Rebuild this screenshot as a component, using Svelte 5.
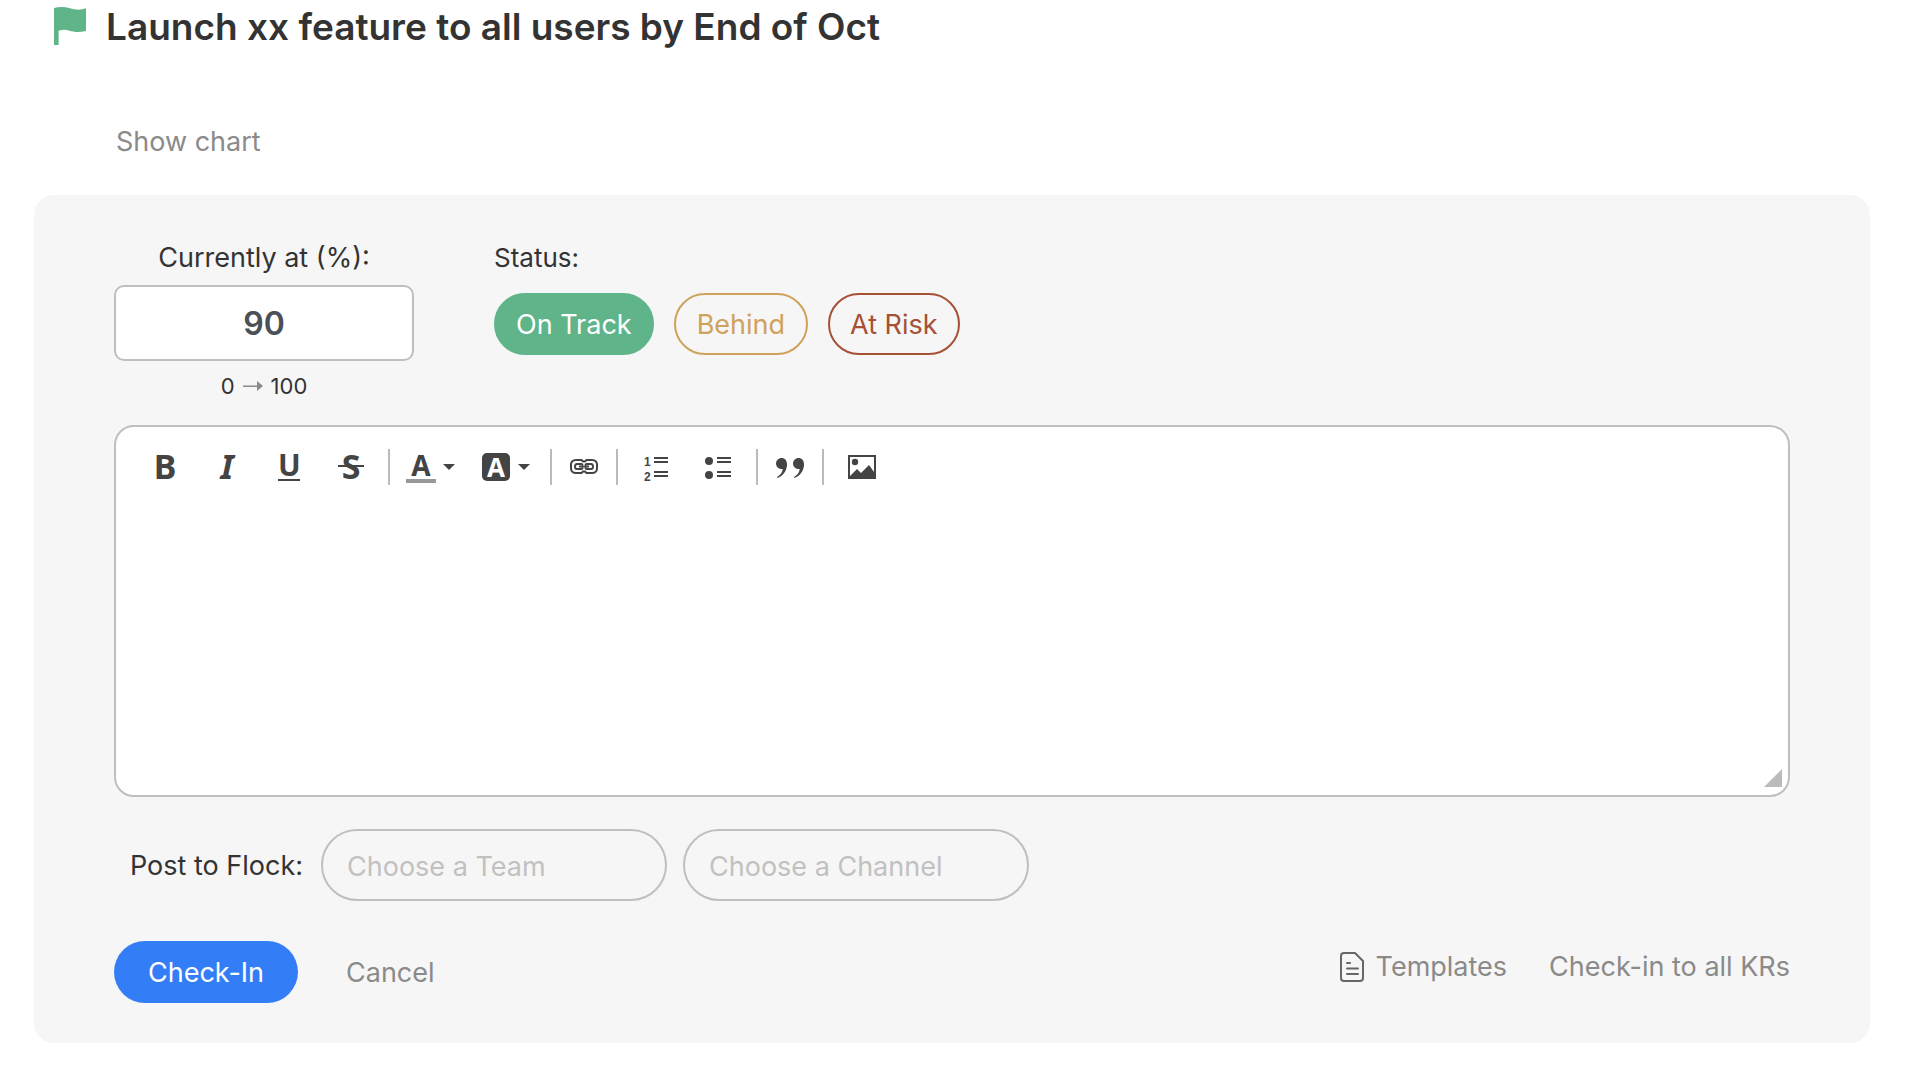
<script lang="ts">
  type Status = { id: string; label: string };

  const statuses: Status[] = [
    { id: "on-track", label: "On Track" },
    { id: "behind", label: "Behind" },
    { id: "at-risk", label: "At Risk" },
  ];

  let current = $state(90);
  let status = $state("on-track");
  let team = $state("");
  let channel = $state("");
</script>

<header>
  <svg class="flag" viewBox="0 0 32 38" aria-hidden="true">
    <path d="M0 1C5-.4 11-.2 16 1.300C21 3 27 3.200 32 1.300V24C26 25.600 20 25.400 15 23.600C11 22.400 8 22.700 4.600 23.800V38H0Z" />
  </svg>
  <h1>Launch xx feature to all users by End of Oct</h1>
</header>

<button class="plain show-chart">Show chart</button>

<main>
  <section class="progress">
    <div class="current">
      <label for="current-value">Currently at (%):</label>
      <input id="current-value" type="text" inputmode="numeric" bind:value={current} />
      <p class="range">
        <span>0</span>
        <svg viewBox="0 0 20 12" aria-hidden="true">
          <path d="M0 5.500H14V1L20 6L14 11V7H0Z" />
        </svg>
        <span>100</span>
      </p>
    </div>

    <div class="status" role="group" aria-labelledby="status-label">
      <span id="status-label">Status:</span>
      <div class="pills">
        {#each statuses as s}
          <button
            class="pill {s.id}"
            class:selected={status === s.id}
            aria-pressed={status === s.id}
            onclick={() => (status = s.id)}>{s.label}</button
          >
        {/each}
      </div>
    </div>
  </section>

  <section class="editor">
    <div class="toolbar" role="toolbar" aria-label="Formatting">
      <div class="tools first">
        <button class="letter" aria-label="Bold">B</button>
        <button class="letter italic" aria-label="Italic">I</button>
        <button class="letter underline" aria-label="Underline"><span>U</span></button>
        <button class="letter strike" aria-label="Strikethrough"><span>S</span></button>
      </div>
      <div class="tools colors">
        <button class="menu" aria-label="Text color">
          <span class="text-color">A</span>
          <svg class="caret" viewBox="0 0 12 6"><path d="M0 0H12L6 6Z" /></svg>
        </button>
        <button class="menu" aria-label="Background color">
          <span class="fill-color">A</span>
          <svg class="caret" viewBox="0 0 12 6"><path d="M0 0H12L6 6Z" /></svg>
        </button>
      </div>
      <div class="tools">
        <button aria-label="Insert link">
          <svg width="28" height="28" viewBox="0 0 28 28" fill="none" stroke="#444" stroke-width="2">
            <path d="M13 8.500L11.500 7H6C3 7 1 9 1 11.500V15.500C1 18 3 20 6 20H11.500L13 18.500H15L16.500 20H22C25 20 27 18 27 15.500V11.500C27 9 25 7 22 7H16.500L15 8.500Z" />
            <path d="M13 12L11.500 11H7C5.500 11 5 12 5 13.500C5 15 5.500 16 7 16H11.500L13 15M15 12L16.500 11H21C22.500 11 23 12 23 13.500C23 15 22.500 16 21 16H16.500L15 15M9 13.500H19" />
          </svg>
        </button>
      </div>
      <div class="tools wide">
        <button aria-label="Numbered list">
          <svg width="26" height="34" viewBox="0 -3 26 34" fill="#444">
            <text x="1" y="13">1</text>
            <text x="1" y="28">2</text>
            <path d="M11 4h14v2H11zM11 8h14v2H11zM11 18h14v2H11zM11 22h14v2H11z" />
          </svg>
        </button>
        <button aria-label="Bulleted list">
          <svg width="26" height="28" viewBox="0 0 26 28" fill="#444">
            <circle cx="4" cy="8" r="4" />
            <circle cx="4" cy="22" r="4" />
            <path d="M12 4h14v2H12zM12 8h14v2H12zM12 18h14v2H12zM12 22h14v2H12z" />
          </svg>
        </button>
      </div>
      <div class="tools">
        <button aria-label="Quote">
          <svg width="28" height="28" viewBox="0 0 28 28" fill="#444">
            <path d="M5.500 5C9 5 11 7.500 11 11.500C11 17.500 7 23 1.500 25L1 24C4.500 22 6.500 19 6.700 16C2.500 16.500 0 13.500 0 10.500C0 7.500 2.500 5 5.500 5Z" />
            <path d="M22.500 5C26 5 28 7.500 28 11.500C28 17.500 24 23 18.500 25L18 24C21.500 22 23.500 19 23.700 16C19.500 16.500 17 13.500 17 10.500C17 7.500 19.500 5 22.500 5Z" />
          </svg>
        </button>
      </div>
      <div class="tools wide">
        <button aria-label="Insert image">
          <svg width="28" height="28" viewBox="0 0 28 28" fill="#444">
            <path fill-rule="evenodd" d="M0 2H28V26H0ZM2 4V23L9 16L13 20L21 12L26 19V4Z" />
            <circle cx="7" cy="9" r="3.200" />
          </svg>
        </button>
      </div>
    </div>
    <textarea aria-label="Check-in notes"></textarea>
    <svg class="grip" viewBox="0 0 18 18" aria-hidden="true"><path d="M18 0V18H0Z" /></svg>
  </section>

  <section class="post">
    <label for="team">Post to Flock:</label>
    <input id="team" type="text" placeholder="Choose a Team" bind:value={team} />
    <input type="text" aria-label="Channel" placeholder="Choose a Channel" bind:value={channel} />
  </section>

  <footer>
    <button class="check-in">Check-In</button>
    <button class="plain cancel">Cancel</button>
    <div class="links">
      <button class="plain">
        <svg width="24" height="30" viewBox="0 0 24 30" fill="none" stroke="#666" stroke-width="2" stroke-linecap="round" stroke-linejoin="round">
          <path d="M4 1H15L23 9V26Q23 29 20 29H4Q1 29 1 26V4Q1 1 4 1ZM7 11H10M7 16.500H18M7 22H18" />
        </svg>
        Templates
      </button>
      <button class="plain">Check-in to all KRs</button>
    </div>
  </footer>
</main>

<style>
  :global(body) {
    margin: 0;
    background: #fff;
    color: #333;
    font: 27px/32px Inter, "Liberation Sans", sans-serif;
  }

  button,
  input,
  textarea {
    font: inherit;
    box-sizing: border-box;
  }

  button {
    padding: 0;
    border: none;
    background: none;
    color: inherit;
    cursor: pointer;
  }

  header {
    display: flex;
    align-items: flex-start;
    gap: 20px;
    padding: 0 56px 0 54px;
  }

  .flag {
    width: 32px;
    height: 38px;
    margin-top: 7px;
    fill: #60b48a;
  }

  h1 {
    margin: 0;
    font-size: 37px;
    font-weight: 600;
    line-height: 54px;
  }

  .plain {
    color: #8a8a8a;
  }

  .show-chart {
    display: block;
    margin: 72px 0 37px 116px;
  }

  main {
    margin: 0 56px 40px 34px;
    padding: 47px 80px 40px;
    border-radius: 20px;
    background: #f6f6f6;
  }

  .progress {
    display: flex;
    gap: 80px;
  }

  .current {
    display: flex;
    flex-direction: column;
    align-items: center;
    width: 300px;
  }

  .current input {
    width: 100%;
    height: 76px;
    margin-top: 11px;
    border: 2px solid #bfbfbf;
    border-radius: 10px;
    background: #fff;
    color: #4b5058;
    font-size: 32px;
    font-weight: 600;
    text-align: center;
  }

  .range {
    display: flex;
    align-items: center;
    gap: 8px;
    margin: 9px 0 0;
    font-size: 22px;
  }

  .range svg {
    width: 20px;
    height: 12px;
    fill: #8a8a8a;
  }

  #status-label {
    font-size: 26px;
  }

  .pills {
    display: flex;
    gap: 20px;
    margin-top: 19px;
  }

  .pill,
  .check-in {
    height: 62px;
    padding: 2px 20px 0;
    border-radius: 31px;
  }

  .pill {
    border: 2px solid;
  }

  .on-track {
    color: #60b48a;
  }

  .behind {
    padding: 2px 21px 0;
    color: #cfa25c;
  }

  .at-risk {
    color: #a65035;
  }

  .on-track.selected {
    border-color: #60b48a;
    background: #60b48a;
    color: #fff;
  }

  .behind.selected {
    border-color: #cfa25c;
    background: #cfa25c;
    color: #fff;
  }

  .at-risk.selected {
    border-color: #a65035;
    background: #a65035;
    color: #fff;
  }

  .editor {
    position: relative;
    margin-top: 23px;
    border: 2px solid #bfbfbf;
    border-radius: 20px;
    background: #fff;
  }

  .toolbar {
    display: flex;
    padding: 22px 18px;
    color: #444;
  }

  .tools {
    display: flex;
    height: 36px;
    padding: 0 1px;
    border-left: 2px solid #bbb;
  }

  .tools.first {
    padding: 0 6px 0 0;
    border-left: none;
  }

  .tools.colors {
    padding: 0 6px 0 2px;
  }

  .tools.wide {
    padding: 0 7px;
  }

  .tools button {
    display: flex;
    align-items: center;
    justify-content: center;
    width: 62px;
  }

  .tools text {
    font: bold 12px "Liberation Sans", sans-serif;
  }

  .tools .letter,
  .text-color,
  .fill-color {
    font-family: "Noto Sans", sans-serif;
    font-weight: 700;
  }

  .tools .letter {
    padding-bottom: 2px;
    font-size: 34px;
    line-height: 36px;
  }

  .italic {
    font-style: italic;
  }

  .tools .underline {
    padding-bottom: 0;
  }

  .underline span {
    width: 22px;
    padding-bottom: 2px;
    border-bottom: 2px solid;
    font-size: 30px;
    line-height: 24px;
  }

  .strike span {
    width: 26px;
    background: linear-gradient(#444, #444) center / 100% 2px no-repeat;
  }

  .tools .menu {
    justify-content: flex-start;
    gap: 7px;
    width: 76px;
    padding-left: 14px;
  }

  .text-color,
  .fill-color {
    text-align: center;
    font-size: 28px;
    line-height: 28px;
  }

  .text-color {
    width: 30px;
    border-bottom: 4px solid #999;
  }

  .fill-color {
    width: 28px;
    margin-right: 1px;
    border-radius: 5px;
    background: #444;
    color: #fff;
    font-size: 26px;
  }

  .caret {
    width: 12px;
    height: 6px;
    fill: #444;
  }

  textarea {
    display: block;
    width: 100%;
    height: 288px;
    padding: 0 36px;
    border: none;
    outline: none;
    background: none;
    resize: none;
  }

  .grip {
    position: absolute;
    right: 6px;
    bottom: 8px;
    width: 18px;
    height: 18px;
    fill: #bbb;
  }

  .post {
    display: flex;
    align-items: center;
    gap: 16px;
    margin-top: 32px;
    padding-left: 16px;
  }

  .post label {
    padding: 2px 2px 0 0;
  }

  .post input {
    width: 346px;
    height: 72px;
    padding: 2px 24px 0;
    border: 2px solid #bfbfbf;
    border-radius: 36px;
    background: none;
  }

  .post input::placeholder {
    color: #c1c1c1;
    opacity: 1;
  }

  footer {
    display: flex;
    align-items: center;
    gap: 48px;
    margin-top: 40px;
  }

  .check-in {
    width: 184px;
    background: #337ef7;
    color: #fff;
  }

  .cancel {
    padding-top: 2px;
  }

  .links {
    display: flex;
    gap: 42px;
    margin: 0 0 10px auto;
  }

  .links button {
    display: flex;
    align-items: center;
    gap: 12px;
  }
</style>
